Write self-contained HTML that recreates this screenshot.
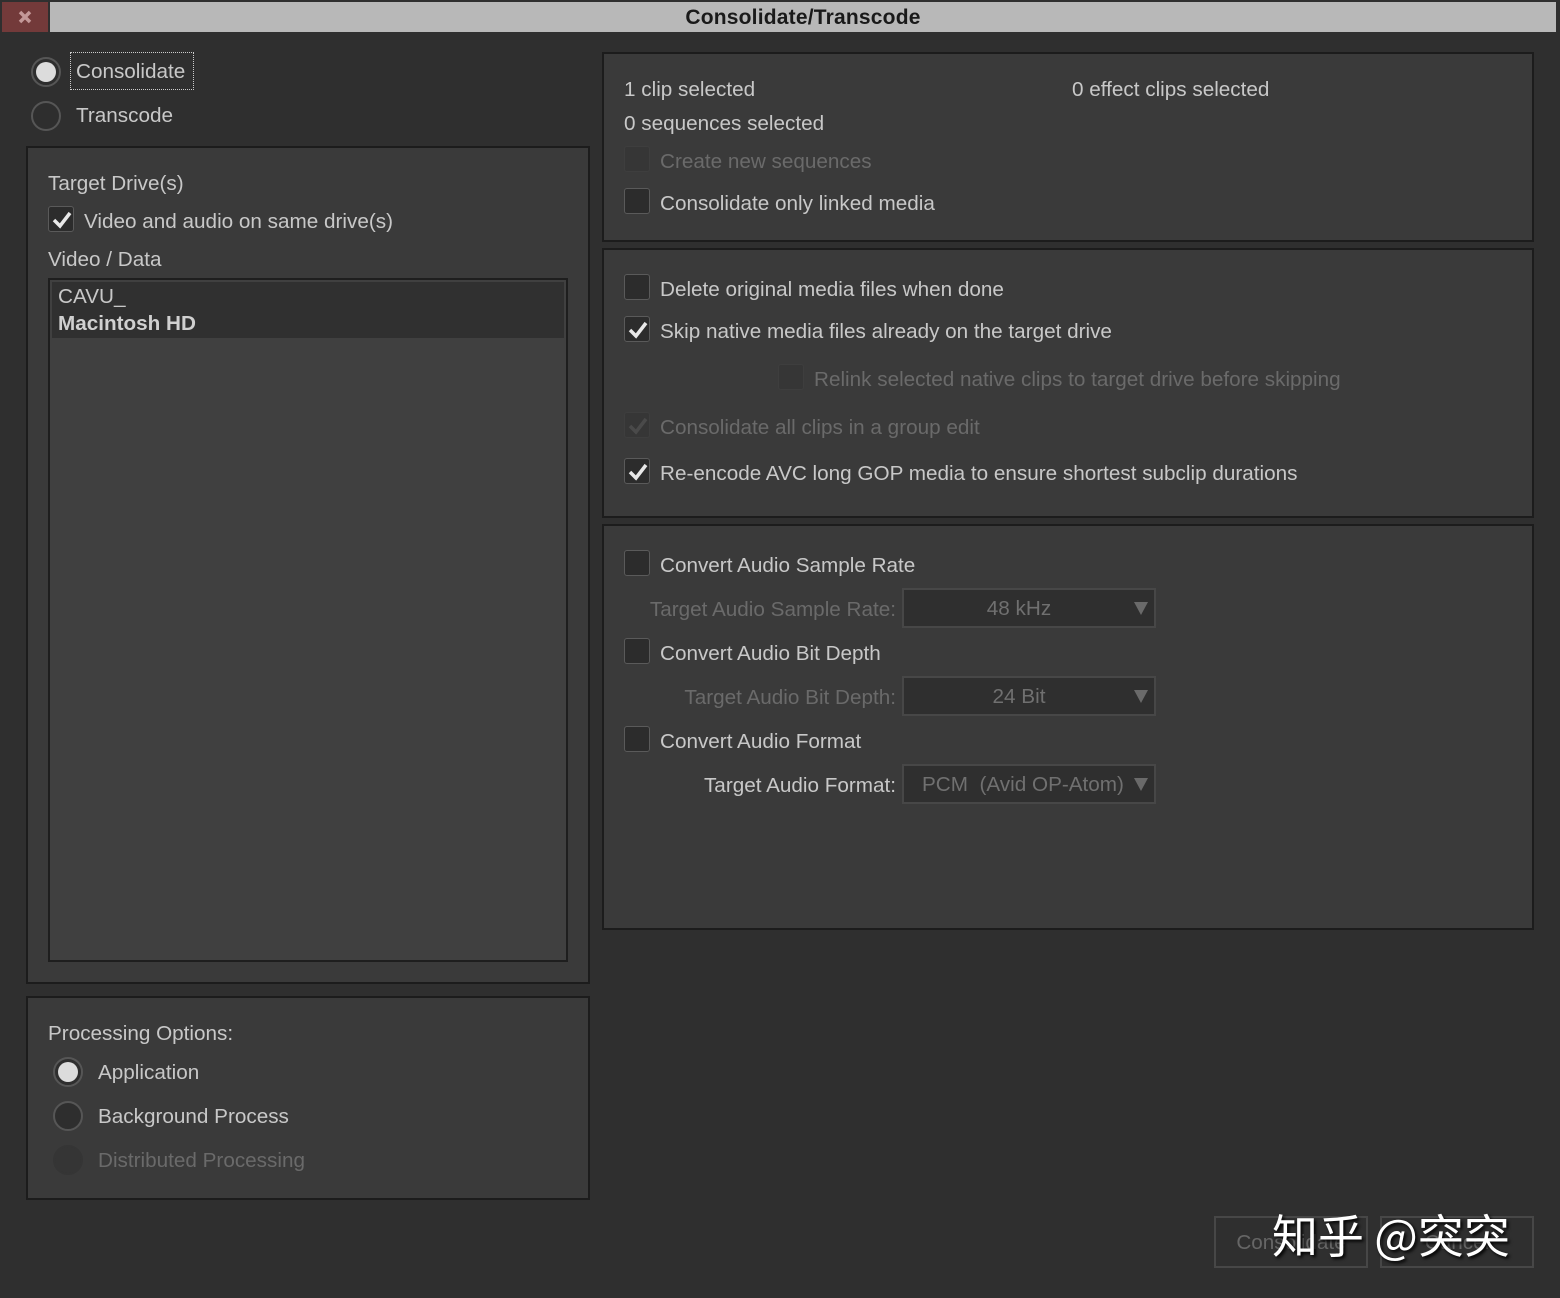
<!DOCTYPE html>
<html><head><meta charset="utf-8"><style>
*{margin:0;padding:0;box-sizing:border-box}
body{width:1560px;height:1298px;background:#2f2f2f;position:relative;overflow:hidden;font-family:"Liberation Sans","Noto Sans CJK SC",sans-serif;font-size:20.7px;color:#c8c8c8}
.a{position:absolute;white-space:nowrap;line-height:30px}
.p{position:absolute;background:#3a3a3a;border:2px solid #1c1c1c}
.cb{position:absolute;width:26px;height:26px;border:1.5px solid #5a5a5a;border-radius:3px;background:#2c2c2c}
.cb.dis{border-color:#3e3e3e;background:#363636}
.cb svg{position:absolute;left:2px;top:2px}
.rd{position:absolute;width:30px;height:30px;border:2px solid #565656;border-radius:50%;background:#2e2e2e}
.rd.on::after{content:"";position:absolute;left:3px;top:3px;width:20px;height:20px;border-radius:50%;background:#dcdcdc}
.rd.dis{border-color:#353535;background:#353535}
.dim{color:#6a6a6a}
.dd{position:absolute;width:254px;height:40px;background:#2f2f2f;border:2px solid #474747;color:#707070;text-align:center;line-height:37px;padding-right:20px}
.dd::after{content:"";position:absolute;right:6px;top:12px;border-left:7px solid transparent;border-right:7px solid transparent;border-top:13px solid #6a6a6a}
</style></head><body>
<div class="a" style="left:2px;top:2px;width:46px;height:30px;background:#733a3a"></div>
<svg class="a" style="left:18px;top:10px" width="14" height="14"><path d="M2 2L12 12M12 2L2 12" stroke="#c49898" stroke-width="3.5"/></svg>
<div class="a" style="left:50px;top:2px;width:1506px;height:30px;background:#b8b8b8;color:#1a1a1a;text-align:center;line-height:32px;font-size:21px;font-weight:bold;letter-spacing:0.2px">Consolidate/Transcode</div>

<div class="rd on" style="left:31px;top:57px"></div>
<div class="a" style="left:70px;top:52px;width:124px;height:38px;border:1.5px dotted #ccc"></div>
<div class="a" style="left:76px;top:57px">Consolidate</div>
<div class="rd" style="left:31px;top:101px"></div>
<div class="a" style="left:76px;top:101px">Transcode</div>

<div class="p" style="left:26px;top:146px;width:564px;height:838px"></div>
<div class="a" style="left:48px;top:169px">Target Drive(s)</div>
<div class="cb" style="left:48px;top:206px"><svg width="22" height="22"><path d="M3 11L9 17L19 4" stroke="#e8e8e8" stroke-width="3.5" fill="none"/></svg></div>
<div class="a" style="left:84px;top:207px">Video and audio on same drive(s)</div>
<div class="a" style="left:48px;top:245px">Video / Data</div>
<div class="a" style="left:48px;top:278px;width:520px;height:684px;background:#404040;border:2px solid #1e1e1e"></div>
<div class="a" style="left:52px;top:282px;width:512px;height:56px;background:#303030"></div>
<div class="a" style="left:58px;top:282px">CAVU_</div>
<div class="a" style="left:58px;top:309px;font-weight:bold;color:#d0d0d0">Macintosh HD</div>

<div class="p" style="left:26px;top:996px;width:564px;height:204px"></div>
<div class="a" style="left:48px;top:1019px">Processing Options:</div>
<div class="rd on" style="left:53px;top:1057px"></div>
<div class="a" style="left:98px;top:1058px">Application</div>
<div class="rd" style="left:53px;top:1101px"></div>
<div class="a" style="left:98px;top:1102px">Background Process</div>
<div class="rd dis" style="left:53px;top:1145px"></div>
<div class="a dim" style="left:98px;top:1146px">Distributed Processing</div>

<div class="p" style="left:602px;top:52px;width:932px;height:190px"></div>
<div class="a" style="left:624px;top:75px">1 clip selected</div>
<div class="a" style="left:1072px;top:75px">0 effect clips selected</div>
<div class="a" style="left:624px;top:109px">0 sequences selected</div>
<div class="cb dis" style="left:624px;top:146px"></div>
<div class="a dim" style="left:660px;top:147px">Create new sequences</div>
<div class="cb" style="left:624px;top:188px"></div>
<div class="a" style="left:660px;top:189px">Consolidate only linked media</div>

<div class="p" style="left:602px;top:248px;width:932px;height:270px"></div>
<div class="cb" style="left:624px;top:274px"></div>
<div class="a" style="left:660px;top:275px">Delete original media files when done</div>
<div class="cb" style="left:624px;top:316px"><svg width="22" height="22"><path d="M3 11L9 17L19 4" stroke="#e8e8e8" stroke-width="3.5" fill="none"/></svg></div>
<div class="a" style="left:660px;top:317px">Skip native media files already on the target drive</div>
<div class="cb dis" style="left:778px;top:364px"></div>
<div class="a dim" style="left:814px;top:365px">Relink selected native clips to target drive before skipping</div>
<div class="cb dis" style="left:624px;top:412px"><svg width="22" height="22"><path d="M3 11L9 17L19 4" stroke="#4a4a4a" stroke-width="3.5" fill="none"/></svg></div>
<div class="a dim" style="left:660px;top:413px">Consolidate all clips in a group edit</div>
<div class="cb" style="left:624px;top:458px"><svg width="22" height="22"><path d="M3 11L9 17L19 4" stroke="#e8e8e8" stroke-width="3.5" fill="none"/></svg></div>
<div class="a" style="left:660px;top:459px">Re-encode AVC long GOP media to ensure shortest subclip durations</div>

<div class="p" style="left:602px;top:524px;width:932px;height:406px"></div>
<div class="cb" style="left:624px;top:550px"></div>
<div class="a" style="left:660px;top:551px">Convert Audio Sample Rate</div>
<div class="a dim" style="left:600px;top:595px;width:296px;text-align:right">Target Audio Sample Rate:</div>
<div class="dd" style="left:902px;top:588px">48 kHz</div>
<div class="cb" style="left:624px;top:638px"></div>
<div class="a" style="left:660px;top:639px">Convert Audio Bit Depth</div>
<div class="a dim" style="left:600px;top:683px;width:296px;text-align:right">Target Audio Bit Depth:</div>
<div class="dd" style="left:902px;top:676px">24 Bit</div>
<div class="cb" style="left:624px;top:726px"></div>
<div class="a" style="left:660px;top:727px">Convert Audio Format</div>
<div class="a" style="left:600px;top:771px;width:296px;text-align:right">Target Audio Format:</div>
<div class="dd" style="left:902px;top:764px;text-align:left;padding-left:18px">PCM&nbsp; (Avid OP-Atom)</div>

<div class="a" style="left:1214px;top:1216px;width:154px;height:52px;border:2px solid #474747;color:#666;text-align:center;line-height:50px">Consolidate</div>
<div class="a" style="left:1380px;top:1216px;width:154px;height:52px;border:2px solid #474747;color:#666;text-align:center;line-height:50px">Cancel</div>
<div class="a" style="left:1272px;top:1204px;font-size:46px;line-height:60px;color:#fff;font-family:'Noto Sans CJK SC',sans-serif;text-shadow:2px 2px 3px #000">知乎 @突突</div>
</body></html>
